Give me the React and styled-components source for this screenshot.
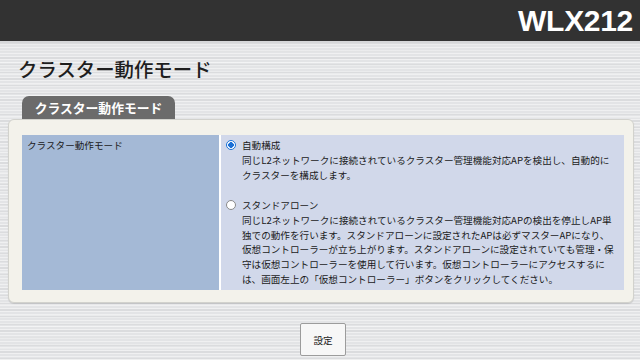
import React from 'react';
import styled, { createGlobalStyle } from 'styled-components';

const GlobalStyle = createGlobalStyle`
  html, body {
    margin: 0;
    padding: 0;
  }

  body {
    width: 640px;
    height: 360px;
    overflow: hidden;
    font-family: "Noto Sans CJK JP", "Noto Sans", sans-serif;
    background-color: #e3e4e6;
    background-image:
      repeating-linear-gradient(0deg, rgba(255, 255, 255, 0.45) 0 1px, transparent 1px 3px),
      repeating-linear-gradient(0deg, rgba(0, 0, 0, 0.035) 0 2px, transparent 2px 7px),
      repeating-linear-gradient(0deg, rgba(255, 255, 255, 0.25) 0 1px, transparent 1px 11px);
  }
`;

const Header = styled.header`
  display: flex;
  justify-content: flex-end;
  align-items: center;
  height: 41px;
  padding-right: 7px;
  background: #323232;
  border-bottom: 2px solid #d6d7d9;

  .model {
    font-family: "Liberation Sans", Arial, sans-serif;
    font-weight: bold;
    font-size: 30px;
    color: #ffffff;
    letter-spacing: -0.3px;
  }
`;

const Main = styled.main`
  display: flex;
  flex-direction: column;
  padding: 0 6px 0 8px;
`;

const PageTitle = styled.h1`
  margin: 14px 0 0 10px;
  font-size: 19.4px;
  line-height: 24px;
  font-weight: 500;
  color: #1e1e1e;
`;

const Tab = styled.div`
  align-self: flex-start;
  margin: 15px 0 0 14px;
  width: 153px;
  height: 23px;
  line-height: 24px;
  text-align: center;
  background: #6b6b6b;
  border-radius: 7px 7px 0 0;
  color: #ffffff;
  font-weight: bold;
  font-size: 12.8px;
`;

const Panel = styled.section`
  padding: 15px 9px 12px 13px;
  background: #f3f2eb;
  border: 1px solid #d2d2cd;
  border-radius: 6px;
  box-shadow: 0 1px 1px rgba(0, 0, 0, 0.12);
`;

const SettingTable = styled.div`
  display: grid;
  grid-template-columns: 197px 1fr;
  column-gap: 2px;
  background: #ffffff;
  height: 155px;
`;

const LabelCell = styled.div`
  background: #a4b9d6;
  padding: 3px 5px;
  font-size: 9.6px;
  line-height: 15px;
  color: #1a1a1a;
`;

const ValueCell = styled.div`
  display: flex;
  flex-direction: column;
  gap: 15px;
  background: #d1d8ea;
  padding: 3px 5px;
`;

const Option = styled.label`
  display: grid;
  grid-template-columns: 16px 1fr;
  font-size: 9.6px;
  line-height: 14.9px;
  color: #1a1a1a;
  white-space: nowrap;
`;

const Radio = styled.span`
  width: 10px;
  height: 10px;
  margin-top: 2px;
  box-sizing: border-box;
  border-radius: 50%;
  border: 1px solid ${p => (p.checked ? '#1a73d8' : '#8a8a8a')};
  background: ${p =>
    p.checked ? 'radial-gradient(circle, #1a6fd6 0 2.6px, #ffffff 3px)' : '#ffffff'};
`;

const ButtonRow = styled.div`
  display: flex;
  justify-content: center;
  padding: 20px 0 0 4px;
`;

const SubmitButton = styled.button`
  width: 46px;
  height: 33px;
  padding: 0;
  background: #f7f7f7;
  border: 1px solid #9c9c9c;
  border-radius: 2px;
  font-family: "Noto Sans CJK JP", sans-serif;
  font-size: 9.6px;
  color: #1a1a1a;
`;

const options = [
  {
    label: '自動構成',
    checked: true,
    lines: [
      '同じL2ネットワークに接続されているクラスター管理機能対応APを検出し、自動的に',
      'クラスターを構成します。',
    ],
  },
  {
    label: 'スタンドアローン',
    checked: false,
    lines: [
      '同じL2ネットワークに接続されているクラスター管理機能対応APの検出を停止しAP単',
      '独での動作を行います。スタンドアローンに設定されたAPは必ずマスターAPになり、',
      '仮想コントローラーが立ち上がります。スタンドアローンに設定されていても管理・保',
      '守は仮想コントローラーを使用して行います。仮想コントローラーにアクセスするに',
      'は、画面左上の「仮想コントローラー」ボタンをクリックしてください。',
    ],
  },
];

const App = () => {
  return <>
    <GlobalStyle />
    <Header>
      <span className="model">WLX212</span>
    </Header>
    <Main>
      <PageTitle>クラスター動作モード</PageTitle>
      <Tab>クラスター動作モード</Tab>
      <Panel>
        <SettingTable>
          <LabelCell>クラスター動作モード</LabelCell>
          <ValueCell>
            {options.map(opt => (
              <Option key={opt.label}>
                <Radio checked={opt.checked} />
                <div>
                  {opt.label}
                  {opt.lines.map(line => <div key={line}>{line}</div>)}
                </div>
              </Option>
            ))}
          </ValueCell>
        </SettingTable>
      </Panel>
      <ButtonRow>
        <SubmitButton>設定</SubmitButton>
      </ButtonRow>
    </Main>
  </>
}

export default App;
